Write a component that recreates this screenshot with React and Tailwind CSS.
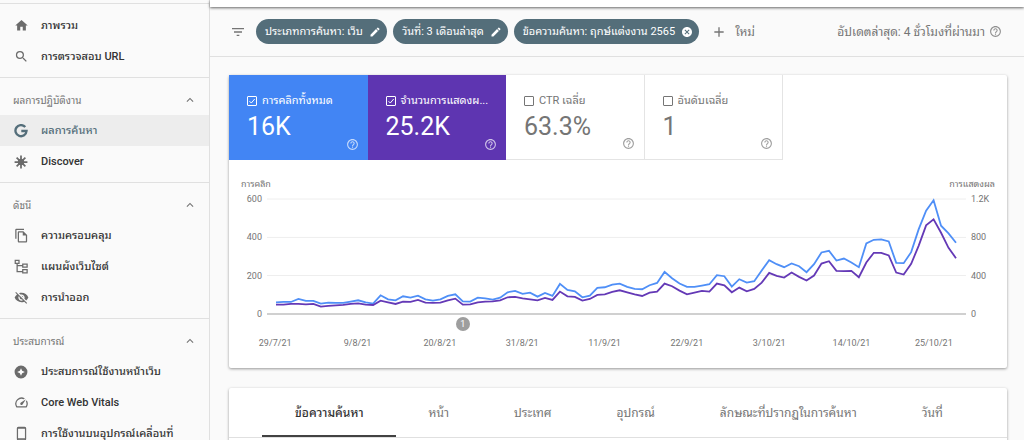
import React from 'react';
import {
  MdAdd,
  MdCancel,
  MdEdit,
  MdExpandLess,
  MdFilterList,
  MdHelpOutline,
  MdHome,
  MdOutlineFileCopy,
  MdOutlineSpeed,
  MdSearch,
  MdVisibilityOff,
} from 'react-icons/md';

const GoogleIcon = () => (
  <svg viewBox="0 0 24 24" className="size-[14px]" fill="none" stroke="currentColor" strokeWidth="4">
    <path d="M19.300 5.300A9.500 9.500 0 1 0 21.500 12H12.500" />
  </svg>
);

const DiscoverIcon = () => (
  <svg viewBox="0 0 24 24" className="size-[14px]" stroke="currentColor" strokeWidth="3">
    <path d="M12 1v22M1 12h22M4.500 4.500l15 15M19.500 4.500l-15 15" />
    <circle cx="12" cy="12" r="4" fill="currentColor" />
  </svg>
);

const SitemapIcon = () => (
  <svg viewBox="0 0 24 24" className="size-[15px]" fill="none" stroke="currentColor" strokeWidth="2">
    <path d="M2 2h6v5H2zM14 8h7v5h-7zM14 17h7v5h-7zM5 7v13h9M5 10.500h9" />
  </svg>
);

const ExperienceIcon = () => (
  <svg viewBox="0 0 24 24" className="size-[14px]" fill="currentColor">
    <path
      fillRule="evenodd"
      d="M12 1a11 11 0 1 0 0 22 11 11 0 0 0 0-22zm0 4.500l2 4.500 4.500 2-4.500 2-2 4.500-2-4.500-4.500-2 4.500-2z"
    />
  </svg>
);

const PhoneIcon = () => (
  <svg viewBox="0 0 24 24" className="size-[15px]" fill="none" stroke="currentColor" strokeWidth="2">
    <rect x="5.500" y="2" width="13" height="20" rx="1.500" />
    <path d="M5.500 3.500h13M5.500 20.500h13" />
  </svg>
);

const topItems = [
  { label: 'ภาพรวม', icon: <MdHome /> },
  { label: 'การตรวจสอบ URL', icon: <MdSearch /> },
];

const sections = [
  {
    title: 'ผลการปฏิบัติงาน',
    items: [
      { label: 'ผลการค้นหา', icon: <GoogleIcon />, active: true },
      { label: 'Discover', icon: <DiscoverIcon /> },
    ],
  },
  {
    title: 'ดัชนี',
    items: [
      { label: 'ความครอบคลุม', icon: <MdOutlineFileCopy /> },
      { label: 'แผนผังเว็บไซต์', icon: <SitemapIcon /> },
      { label: 'การนำออก', icon: <MdVisibilityOff /> },
    ],
  },
  {
    title: 'ประสบการณ์',
    items: [
      { label: 'ประสบการณ์ใช้งานหน้าเว็บ', icon: <ExperienceIcon /> },
      { label: 'Core Web Vitals', icon: <MdOutlineSpeed /> },
      { label: 'การใช้งานบนอุปกรณ์เคลื่อนที่', icon: <PhoneIcon /> },
    ],
  },
];

const filters = [
  { label: 'ประเภทการค้นหา: เว็บ', icon: <MdEdit /> },
  { label: 'วันที่: 3 เดือนล่าสุด', icon: <MdEdit /> },
  { label: 'ข้อความค้นหา: ฤกษ์แต่งงาน 2565', icon: <MdCancel /> },
];

const metrics = [
  { id: 'clicks', label: 'การคลิกทั้งหมด', value: '16K', checked: true, tone: 'bg-[#4285f4] text-white' },
  { id: 'impressions', label: 'จำนวนการแสดงผ...', value: '25.2K', checked: true, tone: 'bg-[#5e35b1] text-white' },
  { id: 'ctr', label: 'CTR เฉลี่ย', value: '63.3%', tone: 'border-r border-b border-[#e4e4e4] text-[#757575]' },
  { id: 'position', label: 'อันดับเฉลี่ย', value: '1', tone: 'border-r border-b border-[#e4e4e4] text-[#757575]' },
];

// Daily points, measured downwards from the top gridline (0) to the baseline (344)
const clicks = [
  309, 308, 308, 299, 305, 305, 313, 310, 311, 311, 307, 303, 309, 313, 288, 300, 303, 291, 295, 289,
  300, 304, 300, 290, 285, 306, 307, 295, 297, 301, 295, 279, 275, 284, 280, 292, 281, 290, 254, 272,
  276, 294, 289, 266, 264, 256, 253, 263, 269, 270, 258, 251, 218, 237, 253, 263, 263, 259, 255, 228,
  231, 262, 240, 250, 246, 214, 183, 195, 204, 193, 201, 219, 195, 160, 155, 184, 178, 190, 204, 133,
  122, 121, 127, 191, 192, 159, 91, 35, 4, 80, 103, 131,
];

const impressions = [
  316, 316, 314, 314, 315, 314, 322, 320, 318, 317, 314, 312, 316, 317, 304, 309, 314, 307, 308, 302,
  310, 311, 310, 303, 298, 316, 315, 309, 307, 306, 303, 294, 293, 297, 300, 303, 296, 302, 277, 291,
  293, 304, 299, 287, 285, 278, 273, 279, 285, 290, 280, 277, 253, 261, 274, 285, 280, 275, 277, 253,
  258, 279, 265, 276, 269, 250, 221, 230, 235, 220, 233, 244, 229, 193, 186, 215, 216, 215, 234, 190,
  161, 161, 169, 220, 226, 194, 140, 79, 61, 101, 146, 177,
];

const dates = ['29/7/21', '9/8/21', '20/8/21', '31/8/21', '11/9/21', '22/9/21', '3/10/21', '14/10/21', '25/10/21'];

const tabs = ['ข้อความค้นหา', 'หน้า', 'ประเทศ', 'อุปกรณ์', 'ลักษณะที่ปรากฏในการค้นหา', 'วันที่'];

const toPoints = (series) => series.map((y, i) => `${27 + i * 22.45},${y}`).join(' ');

const NavItem = ({ label, icon, active }) => (
  <a
    href="#"
    className={`flex h-[31px] items-center gap-3 pl-[13px] text-[11px] font-medium whitespace-nowrap ${
      active ? 'bg-[#ededed] text-[#546e7a]' : 'text-[#333333]'
    }`}
  >
    <span className={`flex w-4 justify-center text-[15px] ${active ? 'text-[#546e7a]' : 'text-[#6b6b6b]'}`}>{icon}</span>
    <span className="pt-[2px]">{label}</span>
  </a>
);

const Sidebar = () => (
  <nav className="w-[210px] shrink-0 border-r border-[#e0e0e0] pt-[3px]">
    <div className="border-t border-[#e0e0e0] pt-[6px] pb-[5px]">
      {topItems.map((item) => (
        <NavItem key={item.label} {...item} />
      ))}
    </div>
    {sections.map((section) => (
      <div key={section.title} className="border-t border-[#e0e0e0] pt-[6px] pb-[5px]">
        <button type="button" className="flex h-[31px] w-full items-center justify-between pr-3 pl-[13px] text-[10px] text-[#757575]">
          <span className="pt-[2px]">{section.title}</span>
          <MdExpandLess className="size-[14px]" />
        </button>
        {section.items.map((item) => (
          <NavItem key={item.label} {...item} />
        ))}
      </div>
    ))}
  </nav>
);

const FilterBar = () => (
  <div className="flex h-[50px] items-center border-b border-[#e0e0e0] pr-[22px] pl-5 text-[12px] text-[#757575]">
    <button type="button" aria-label="ตัวกรอง" className="mr-[10px]">
      <MdFilterList className="size-4" />
    </button>
    <div className="flex gap-[6px] text-[11px]">
      {filters.map((filter) => (
        <button
          key={filter.label}
          type="button"
          className="flex h-[25px] items-center gap-[6px] rounded-full bg-[#546e7a] pr-[6px] pl-[9px] whitespace-nowrap text-white"
        >
          <span className="pt-px">{filter.label}</span>
          <span className="text-[12px]">{filter.icon}</span>
        </button>
      ))}
    </div>
    <button type="button" className="ml-3 flex items-center gap-2">
      <MdAdd className="size-4" />
      ใหม่
    </button>
    <p className="ml-auto flex items-center gap-1 whitespace-nowrap">
      อัปเดตล่าสุด: 4 ชั่วโมงที่ผ่านมา
      <MdHelpOutline className="size-[13px] opacity-80" />
    </p>
  </div>
);

const Metric = ({ id, label, value, checked, tone }) => (
  <div className={`relative h-[85px] pt-[18px] pl-[18px] ${tone}`}>
    <label htmlFor={id} className="flex h-4 items-center gap-[5px] text-[11px] whitespace-nowrap">
      <span className="grid shrink-0 place-items-center">
        <input
          id={id}
          type="checkbox"
          defaultChecked={checked}
          className="peer col-start-1 row-start-1 size-[10px] appearance-none rounded-[1px] border border-current"
        />
        <svg viewBox="0 0 10 10" className="col-start-1 row-start-1 hidden size-[10px] peer-checked:block" fill="none" stroke="currentColor">
          <path d="M2.500 5.200l1.800 1.800 3.400-4" />
        </svg>
      </span>
      <span className="leading-4">{label}</span>
    </label>
    <p className="mt-1 text-[25px] leading-7">{value}</p>
    <MdHelpOutline className="absolute right-[9px] bottom-[9px] size-[13px] opacity-70" />
  </div>
);

const AxisLabels = ({ values, className = '' }) => (
  <div className={`flex h-[129px] flex-col justify-between leading-[14px] ${className}`}>
    {values.map((value) => (
      <span key={value}>{value}</span>
    ))}
  </div>
);

const Chart = () => (
  <div className="pt-[18px] pb-[18px] text-[9px] text-[#757575]">
    <div className="flex h-[14px] items-center justify-between px-3">
      <span>การคลิก</span>
      <span>การแสดงผล</span>
    </div>
    <div className="flex">
      <AxisLabels values={['600', '400', '200', '0']} className="w-[33px] text-right" />
      <div className="relative mx-[5px] my-[7px] h-[115px] flex-1">
        <svg viewBox="0 0 2100 344" preserveAspectRatio="none" className="block size-full overflow-visible" fill="none">
          <g stroke="#eeeeee" shapeRendering="crispEdges">
            <path d="M0 0H2100M0 115H2100M0 229H2100" vectorEffect="non-scaling-stroke" />
          </g>
          <path d="M0 344H2100" stroke="#d0d0d0" strokeWidth="2" vectorEffect="non-scaling-stroke" />
          <polyline points={toPoints(clicks)} stroke="#4f8ff7" strokeWidth="1.800" vectorEffect="non-scaling-stroke" />
          <polyline points={toPoints(impressions)} stroke="#6439b6" strokeWidth="1.800" vectorEffect="non-scaling-stroke" />
        </svg>
        <button
          type="button"
          className="absolute top-full left-[28%] mt-[3px] size-[14px] -translate-x-1/2 rounded-full bg-[#9e9e9e] text-[9px] leading-[14px] text-white"
        >
          1
        </button>
      </div>
      <AxisLabels values={['1.2K', '800', '400', '0']} className="w-[36px]" />
    </div>
    <div className="mt-[15px] grid grid-cols-9 pr-8 pl-[5px] text-center leading-[14px]">
      {dates.map((date) => (
        <span key={date}>{date}</span>
      ))}
    </div>
  </div>
);

const Card = ({ children }) => <section className="rounded-[2px] bg-white shadow-[0_1px_3px_rgba(0,0,0,0.4)]">{children}</section>;

export default function App() {
  return (
    <div className="flex h-screen overflow-hidden bg-[#fafafa] font-['Roboto','Noto_Sans_Thai_Looped','Noto_Looped_Thai','Loma','Waree','Noto_Sans_Thai',sans-serif]">
      <Sidebar />
      <main className="min-w-0 flex-1">
        <div className="h-[7px] bg-white shadow-[0_1px_3px_rgba(0,0,0,0.6)]" />
        <FilterBar />
        <div className="flex flex-col gap-5 pt-[18px] pr-[17px] pl-[19px]">
          <Card>
            <div className="grid w-[554px] grid-cols-4">
              {metrics.map((metric) => (
                <Metric key={metric.id} {...metric} />
              ))}
            </div>
            <Chart />
          </Card>
          <Card>
            <div role="tablist" className="flex h-[50px] border-b border-[#e0e0e0] pl-[33px] text-[12px] whitespace-nowrap">
              {tabs.map((tab, i) => (
                <button
                  key={tab}
                  type="button"
                  role="tab"
                  aria-selected={i === 0}
                  className={`border-b-2 pt-[2px] pr-8 pl-[33px] ${
                    i === 0 ? 'border-[#424242] font-medium text-[#333333]' : 'border-transparent text-[#757575]'
                  }`}
                >
                  {tab}
                </button>
              ))}
            </div>
            <div className="h-20" />
          </Card>
        </div>
      </main>
    </div>
  );
}
